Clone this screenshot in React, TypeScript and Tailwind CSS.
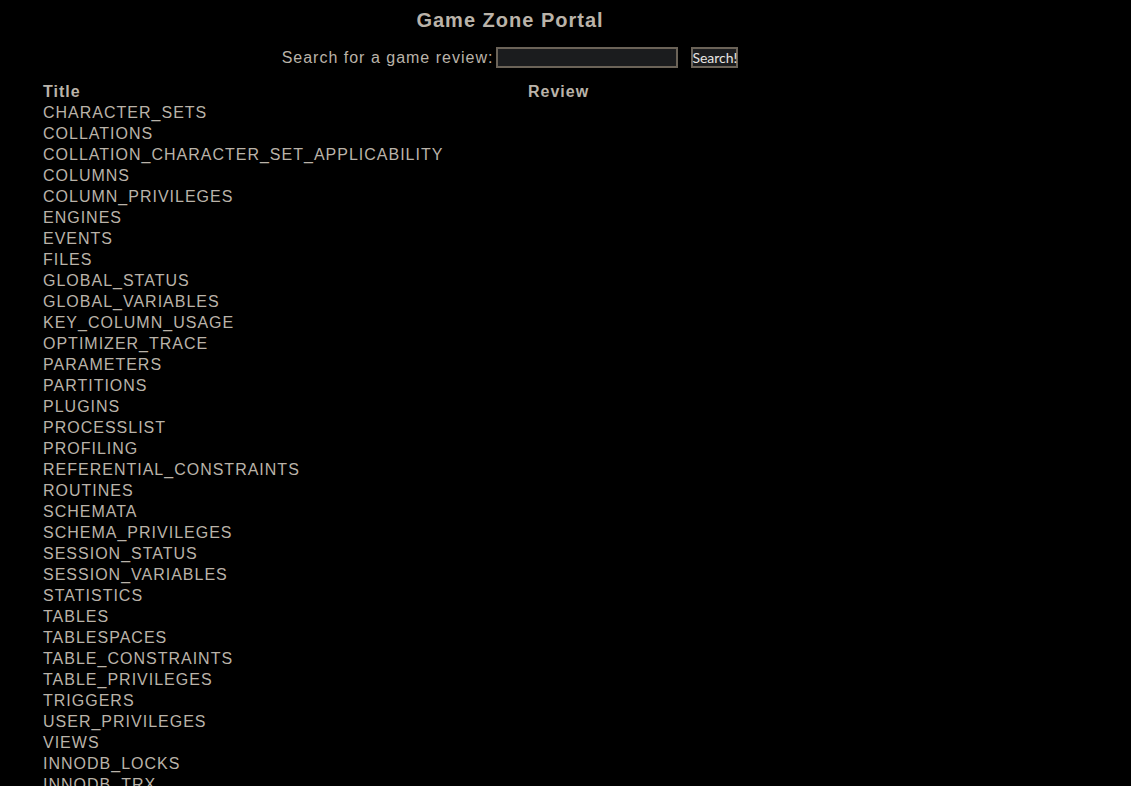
const tables = [
  "CHARACTER_SETS",
  "COLLATIONS",
  "COLLATION_CHARACTER_SET_APPLICABILITY",
  "COLUMNS",
  "COLUMN_PRIVILEGES",
  "ENGINES",
  "EVENTS",
  "FILES",
  "GLOBAL_STATUS",
  "GLOBAL_VARIABLES",
  "KEY_COLUMN_USAGE",
  "OPTIMIZER_TRACE",
  "PARAMETERS",
  "PARTITIONS",
  "PLUGINS",
  "PROCESSLIST",
  "PROFILING",
  "REFERENTIAL_CONSTRAINTS",
  "ROUTINES",
  "SCHEMATA",
  "SCHEMA_PRIVILEGES",
  "SESSION_STATUS",
  "SESSION_VARIABLES",
  "STATISTICS",
  "TABLES",
  "TABLESPACES",
  "TABLE_CONSTRAINTS",
  "TABLE_PRIVILEGES",
  "TRIGGERS",
  "USER_PRIVILEGES",
  "VIEWS",
  "INNODB_LOCKS",
  "INNODB_TRX",
  "INNODB_SYS_DATAFILES",
  "INNODB_FT_CONFIG",
  "INNODB_SYS_VIRTUAL",
];

export default function App() {
  return (
    <div className="min-h-screen bg-black text-[#bab3a9] font-['Liberation_Sans',Arial,sans-serif] text-[16px] tracking-[1px]">
      <div className="w-[1020px] flex flex-col items-center">
        <h1 className="pt-[8px] text-[20px] leading-[24px] font-bold">
          Game Zone Portal
        </h1>
        <form
          className="mt-[15px] flex items-center"
          onSubmit={(e) => e.preventDefault()}
        >
          <label className="leading-[20px]">Search for a game review:</label>
          <input
            type="text"
            className="ml-[3px] w-[182px] h-[21px] bg-[#1b1c1e] border-2 border-[#6b6358] outline-none"
          />
          <button
            type="submit"
            className="ml-[13px] w-[47px] h-[21px] px-0 bg-[#1b1c1e] border-2 border-[#6b6358] text-[#e8e6e3] text-[14px] leading-[15px] tracking-normal font-['Lato',sans-serif] flex items-center justify-center"
          >
            Search!
          </button>
        </form>
      </div>
      <div className="pl-[43px] mt-[13px] grid grid-cols-[485px_1fr] leading-[21px]">
        <div className="font-bold">Title</div>
        <div className="font-bold">Review</div>
        {tables.map((t) => (
          <div key={t} className="col-span-2">
            {t}
          </div>
        ))}
      </div>
    </div>
  );
}
